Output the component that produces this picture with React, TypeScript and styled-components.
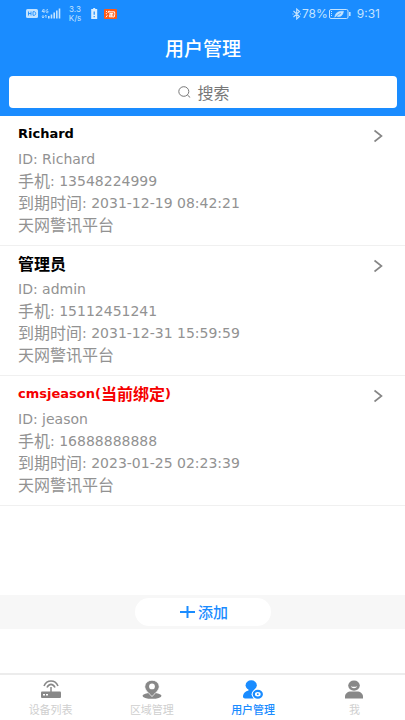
import React from "react";
import styled, { createGlobalStyle } from "styled-components";

const latin = '"DejaVu Sans"';
const cjk = '"Noto Sans CJK SC"';
const blue = "#1a8cff";

const GlobalStyle = createGlobalStyle`
  * { box-sizing: border-box; }
  body { margin: 0; background: #fff; font-family: ${latin}, ${cjk}, sans-serif; }
  button, input { font: inherit; color: inherit; border: 0; background: none; padding: 0; }
  svg { display: block; flex: none; }
`;

const Page = styled.div`
  min-height: 100vh;
  display: flex;
  flex-direction: column;
`;

const Header = styled.header`
  background: ${blue};
  padding: 0 8px 8px 9px;
`;

const StatusBar = styled.div`
  height: 28px;
  padding: 0 17px;
  display: flex;
  align-items: center;
  justify-content: space-between;
  color: #c3e3ff;
`;

const StatusGroup = styled.div`
  display: flex;
  align-items: center;
`;

const StatusText = styled.span`
  font: 12px/16px Inter, sans-serif;
`;

const Clock = styled(StatusText)`
  margin-left: 5px;
`;

const Speed = styled.span`
  display: flex;
  flex-direction: column;
  align-items: center;
  width: 16px;
  margin: 0 6px 0 5px;
  font: 8px/9px Inter, sans-serif;
`;

const Title = styled.h1`
  margin: 0;
  height: 48px;
  padding-top: 6px;
  font: 500 19px/28px ${cjk}, sans-serif;
  text-align: center;
  color: #fff;
`;

const Search = styled.label`
  display: flex;
  align-items: center;
  justify-content: center;
  gap: 6px;
  height: 32px;
  padding-left: 2px;
  border-radius: 4px;
  background: #fff;
  color: #777;
`;

const SearchInput = styled.input`
  field-sizing: content;
  min-width: 32px;
  height: 24px;
  outline: 0;
  font-family: ${cjk}, sans-serif;
  font-size: 16px;
  &::placeholder { color: #777; opacity: 1; }
`;

const List = styled.ul`
  flex: 1;
  margin: 0;
  padding: 0;
  list-style: none;
`;

const Row = styled.li`
  border-bottom: 1px solid #f0f0f0;
`;

const RowButton = styled.button`
  display: flex;
  width: 100%;
  align-items: flex-start;
  justify-content: space-between;
  padding: 7px 22px 9px 18px;
  text-align: left;
  cursor: pointer;
`;

const Name = styled.span<{ $current?: boolean }>`
  display: flex;
  height: 22px;
  margin-bottom: 3px;
  font-size: 13px;
  line-height: 22px;
  font-weight: 700;
  color: ${(p) => (p.$current ? "#f50000" : "#000")};
`;

const Line = styled.span`
  display: flex;
  height: 22px;
  font-size: 14px;
  line-height: 22px;
  color: #929292;
  white-space: pre;
`;

const Han = styled.span`
  font-family: ${cjk}, sans-serif;
  font-size: 16px;
  line-height: 20px;
`;

const Chevron = styled.svg`
  margin-top: 6px;
`;

const AddBar = styled.div`
  display: flex;
  justify-content: center;
  padding: 3px 0;
  margin-bottom: 44px;
  background: #f7f7f7;
`;

const AddButton = styled.button`
  display: flex;
  align-items: center;
  justify-content: center;
  gap: 3px;
  width: 136px;
  height: 28px;
  padding-left: 3px;
  border-radius: 14px;
  background: #fff;
  color: ${blue};
  font: 500 15px/20px ${cjk}, sans-serif;
  cursor: pointer;
`;

const TabBar = styled.nav`
  display: grid;
  grid-template-columns: repeat(4, 1fr);
  height: 47px;
  border-top: 2px solid #ececec;
`;

const Tab = styled.a<{ $active?: boolean }>`
  display: flex;
  flex-direction: column;
  align-items: center;
  padding-top: 5px;
  text-decoration: none;
  color: ${(p) => (p.$active ? blue : "#888")};
`;

const TabLabel = styled.span<{ $active?: boolean }>`
  margin-top: 1px;
  font: ${(p) => (p.$active ? 500 : 400)} 11px/16px ${cjk}, sans-serif;
  color: ${(p) => (p.$active ? blue : "#cfcfcf")};
`;

const users = [
  { name: "Richard", id: "Richard", phone: "13548224999", expires: "2031-12-19 08:42:21" },
  { nameHan: "管理员", id: "admin", phone: "15112451241", expires: "2031-12-31 15:59:59" },
  { name: "cmsjeason(", nameHan: "当前绑定", tail: ")", id: "jeason", phone: "16888888888", expires: "2023-01-25 02:23:39", current: true },
];

const RouterIcon = () => (
  <svg width="22" height="20" viewBox="0 0 22 20" fill="none" stroke="currentColor">
    <path d="M4 6C7-.6 15-.6 18 6M7 7.5c2-4.2 6-4.2 8 0" strokeWidth="1.6" />
    <path d="M11 7V12" strokeWidth="1.5" />
    <rect x="1" y="11.5" width="20" height="6.5" rx="1" fill="currentColor" stroke="none" />
    <path d="M3 14.8h2M6 14.8h2" stroke="#fff" strokeWidth="1.4" />
  </svg>
);

const AreaIcon = () => (
  <svg width="22" height="20" viewBox="0 0 22 20" fill="currentColor">
    <ellipse cx="11" cy="15.8" rx="9.5" ry="3" />
    <path d="M11 16.5C7 12.5 3.8 10 3.8 6.4a7.2 6.2 0 0 1 14.4 0c0 3.6-3.2 6.1-7.2 10.1z" stroke="#fff" strokeWidth=".8" />
    <circle cx="11" cy="6.4" r="2.9" fill="#fff" />
  </svg>
);

const UserAdminIcon = () => (
  <svg width="22" height="20" viewBox="0 0 22 20" fill="currentColor">
    <ellipse cx="9.2" cy="5.2" rx="5.6" ry="5" />
    <path d="M6.5 8h6v3l-1 7.4H3.2C1.5 18.4.8 17.5 1 16c.4-3 2.3-4.5 5.5-5.5z" />
    <ellipse cx="15.8" cy="14.2" rx="6.2" ry="5.4" fill="#fff" />
    <ellipse cx="15.8" cy="14.2" rx="4" ry="3.4" fill="#fff" stroke="currentColor" strokeWidth="2.3" />
    <circle cx="15.8" cy="14.2" r=".9" />
  </svg>
);

const MeIcon = () => (
  <svg width="22" height="20" viewBox="0 0 22 20" fill="currentColor">
    <ellipse cx="11" cy="5.6" rx="5.8" ry="5.1" />
    <path d="M7.8 6.2c1 2.6 5.4 2.6 6.4 0-1.8.8-4.6.8-6.4 0z" fill="#fff" />
    <path d="M2 18.6v-1.8c0-3.2 2.7-5.2 6-5.2h6c3.3 0 6 2 6 5.2v1.8z" />
  </svg>
);

const tabs = [
  { label: "设备列表", href: "#devices", Icon: RouterIcon },
  { label: "区域管理", href: "#areas", Icon: AreaIcon },
  { label: "用户管理", href: "#users", Icon: UserAdminIcon, active: true },
  { label: "我", href: "#me", Icon: MeIcon },
];

const SignalIcons = () => (
  <svg width="36" height="12" viewBox="0 0 36 12" fill="currentColor">
    <rect x="0" y="1" width="12" height="9" rx="1.5" />
    <path d="M2.5 3.5v4M5 3.5v4M2.5 5.5H5M7 3.7h1.2c2 0 2 3.6 0 3.6H7z" stroke={blue} strokeWidth=".9" fill="none" />
    <path d="M17.5 1 16 3.5h2.5M18 1v4M22 1.8c-2-1.5-2.8 3-.8 3 1 0 1-1 .8-1.6h-1M17 7v3M16 8.5l1 1.5 1-1.5M20 10V7l-1 1.3" fill="none" stroke="currentColor" strokeWidth=".8" />
    <path d="M22 8h1.6v2.5H22zM24.7 6.5h1.6v4h-1.6zM27.4 4.5H29v6h-1.6zM30 2.5h1.6v8H30zM32.7 .5h1.6v10h-1.6z" />
  </svg>
);

const AlertIcons = () => (
  <svg width="28" height="12" viewBox="0 0 28 12">
    <path d="M2.2 1h2V0h2v1h2v10h-6z" fill="#d9eeff" />
    <path d="M5.2 3.5v3.3M5.2 8v1.2" stroke={blue} strokeWidth="1.2" />
    <rect x="15" y="1" width="13" height="10" rx="1" fill="#ff5a14" />
    <path d="m17 3 1.2 1M16.8 5.3l1.2.8M17 9.3l1.4-2M20 2.8l-1 2M19.8 3.8h5.7c.5 2 .2 4-.4 5.2h-1M20.4 5.4h3.8M20 7h4.4M22.2 5.4v3.2M20.4 7.4v1.4h3.6" stroke="#fff" fill="none" />
  </svg>
);

const BatteryIcon = () => (
  <svg width="24" height="12" viewBox="0 0 24 12" fill="none" stroke="currentColor">
    <rect x="1.5" y="1.5" width="18.5" height="9" rx="1.5" />
    <path d="M21.8 4v4" strokeWidth="1.6" />
    <path d="M7 9c0-4 3-6 8.5-5.8C15 7.5 12 10 8.3 8zM5.8 9.5l4-3" fill="currentColor" strokeWidth=".5" />
    <path d="M8.5 8 13 5" stroke={blue} strokeWidth=".6" />
    <path d="M3.5 3v6" strokeDasharray="1 1" />
  </svg>
);

export default function App() {
  return (
    <Page>
      <GlobalStyle />
      <Header>
        <StatusBar>
          <StatusGroup>
            <SignalIcons />
            <Speed>
              <span>3.3</span>
              <span>K/s</span>
            </Speed>
            <AlertIcons />
          </StatusGroup>
          <StatusGroup>
            <svg width="10" height="12" viewBox="0 0 10 12" fill="none" stroke="currentColor" strokeWidth="1.1">
              <path d="m1.5 3 6 5.5L4.7 11V1l2.8 2.5-6 5.5M.5 6h1M8 6h1" />
            </svg>
            <StatusText>78%</StatusText>
            <BatteryIcon />
            <Clock>9:31</Clock>
          </StatusGroup>
        </StatusBar>
        <Title>用户管理</Title>
        <Search>
          <svg width="13" height="12" viewBox="0 0 13 12" fill="none" stroke="currentColor">
            <ellipse cx="5.8" cy="5.5" rx="5" ry="4.8" />
            <path d="m9.4 9 2.8 2.5" />
          </svg>
          <SearchInput type="text" placeholder="搜索" aria-label="搜索" />
        </Search>
      </Header>
      <List>
        {users.map((u) => (
          <Row key={u.id}>
            <RowButton type="button">
              <span>
                <Name $current={u.current}>
                  {u.name}
                  {u.nameHan && <Han>{u.nameHan}</Han>}
                  {u.tail}
                </Name>
                <Line>ID: {u.id}</Line>
                <Line><Han>手机</Han>: {u.phone}</Line>
                <Line><Han>到期时间</Han>: {u.expires}</Line>
                <Line><Han>天网警讯平台</Han></Line>
              </span>
              <Chevron width="10" height="14" viewBox="0 0 10 14" fill="none" stroke="#858585" strokeWidth="1.6">
                <path d="m1.5 1.5 7 5.5-7 5.5" />
              </Chevron>
            </RowButton>
          </Row>
        ))}
      </List>
      <AddBar>
        <AddButton type="button">
          <svg width="15" height="14" viewBox="0 0 15 14" stroke="currentColor" strokeWidth="2">
            <path d="M7.5 1v12M0 7h15" />
          </svg>
          添加
        </AddButton>
      </AddBar>
      <TabBar>
        {tabs.map(({ label, href, Icon, active }) => (
          <Tab key={label} href={href} $active={active} aria-current={active ? "page" : undefined}>
            <Icon />
            <TabLabel $active={active}>{label}</TabLabel>
          </Tab>
        ))}
      </TabBar>
    </Page>
  );
}
